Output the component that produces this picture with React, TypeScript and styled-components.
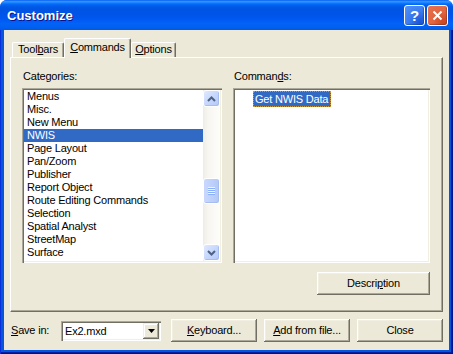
import React from "react";
import styled, { createGlobalStyle } from "styled-components";

const Global = createGlobalStyle`
  html, body { margin: 0; padding: 0; background: #ffffff; }
  body {
    font-family: "Liberation Sans", Arial, sans-serif;
    font-size: 11px;
    letter-spacing: -0.2px;
    color: #000000;
  }
  #root { width: 453px; height: 354px; }
`;

const Window = styled.div`
  width: 453px;
  height: 354px;
  box-sizing: border-box;
  display: flex;
  flex-direction: column;
  border-radius: 7px 7px 0 0;
  overflow: hidden;
  background: #0842e0;
`;

const TitleBar = styled.div`
  height: 30px;
  flex: none;
  box-sizing: border-box;
  display: flex;
  align-items: center;
  padding: 1px 5px 0 7px;
  background: linear-gradient(
    180deg,
    #0058ee 0%,
    #3593ff 4%,
    #288eff 7%,
    #127dff 10%,
    #036ffc 13%,
    #0262ee 17%,
    #0057e5 24%,
    #0054e3 30%,
    #0055eb 56%,
    #005bf5 68%,
    #0463f8 80%,
    #0060ef 90%,
    #0058e6 100%
  );
`;

const Title = styled.div`
  flex: 1;
  font-family: "Liberation Sans", Arial, sans-serif;
  font-weight: bold;
  font-size: 13px;
  letter-spacing: 0;
  color: #ffffff;
  text-shadow: 1px 1px #0f1089;
`;

const CaptionButton = styled.div<{ $kind: "help" | "close" }>`
  width: 21px;
  height: 21px;
  box-sizing: border-box;
  border: 1px solid #ffffff;
  border-radius: 3px;
  margin-left: 2px;
  display: flex;
  align-items: center;
  justify-content: center;
  color: #ffffff;
  font-family: "Liberation Sans", Arial, sans-serif;
  font-weight: bold;
  font-size: 15px;
  background: ${(p) =>
    p.$kind === "close"
      ? "radial-gradient(circle at 80% 85%, #cc4623 0%, #e2643f 45%, #e5744f 100%)"
      : "radial-gradient(circle at 80% 85%, #1a55d8 0%, #3a7cf0 50%, #5594f5 100%)"};
  box-shadow: inset -1px -1px 1px rgba(0, 0, 0, 0.25);
`;

const Frame = styled.div`
  flex: 1;
  display: flex;
  padding: 0 4px 4px 4px;
  background: #0855dd;
  box-shadow: inset 1px 0 #0831d9, inset -1px -1px #00138c, inset -2px -2px #001ea0;
`;

const Body = styled.div`
  flex: 1;
  background: #ece9d8;
  display: flex;
  flex-direction: column;
  padding: 8px 6px 8px 6px;
`;

const TabStrip = styled.div`
  height: 19px;
  flex: none;
  display: flex;
  align-items: flex-end;
  padding-left: 2px;
  position: relative;
  z-index: 1;
`;

const Tab = styled.div<{ $active?: boolean; $w: number }>`
  width: ${(p) => p.$w}px;
  height: ${(p) => (p.$active ? 20 : 15)}px;
  margin-bottom: ${(p) => (p.$active ? -1 : 0)}px;
  box-sizing: border-box;
  background: #ece9d8;
  border-top: 1px solid #ffffff;
  border-left: 1px solid #ffffff;
  border-right: 1px solid #716f64;
  border-radius: 2px 2px 0 0;
  box-shadow: inset -1px 0 #aca899;
  padding-top: ${(p) => (p.$active ? 2 : 0)}px;
  line-height: 12px;
  text-align: center;
  white-space: nowrap;
`;

const Panel = styled.div`
  height: 255px;
  flex: none;
  box-sizing: border-box;
  border-top: 1px solid #ffffff;
  border-left: 1px solid #ffffff;
  border-right: 1px solid #716f64;
  border-bottom: 1px solid #716f64;
  box-shadow: inset -1px -1px #aca899;
  padding: 12px 0 0 11px;
  display: grid;
  grid-template-columns: 200px 197px;
  grid-template-rows: 13px 175px 23px;
  column-gap: 11px;
  row-gap: 0;
`;

const FieldLabel = styled.div`
  line-height: 13px;
  padding-left: 1px;
  white-space: nowrap;
`;

const ListBox = styled.div`
  margin-top: 5px;
  height: 175px;
  box-sizing: border-box;
  padding: 2px;
  background: #ffffff;
  box-shadow: inset 1px 1px #aca899, inset 2px 2px #716f64, inset -1px -1px #ffffff,
    inset -2px -2px #f1efe2;
  display: flex;
  overflow: hidden;
`;

const Items = styled.div`
  flex: 1;
  display: flex;
  flex-direction: column;
  overflow: hidden;
`;

const ListItem = styled.div<{ $selected?: boolean }>`
  height: 13px;
  flex: none;
  line-height: 13px;
  padding-left: 3px;
  white-space: nowrap;
  background: ${(p) => (p.$selected ? "#316ac5" : "transparent")};
  color: ${(p) => (p.$selected ? "#ffffff" : "#000000")};
`;

const ScrollBar = styled.div`
  width: 17px;
  flex: none;
  display: flex;
  flex-direction: column;
  background: linear-gradient(90deg, #eeede5 0%, #f7f6f1 30%, #fdfdfa 100%);
`;

const ScrollButton = styled.div`
  width: 17px;
  height: 17px;
  flex: none;
  box-sizing: border-box;
  border: 1px solid #ffffff;
  border-radius: 3px;
  background: linear-gradient(135deg, #e0e9fe 0%, #c7d7fc 50%, #b5c9f7 100%);
  box-shadow: inset -1px -1px #a6bdf0;
  display: flex;
  align-items: center;
  justify-content: center;
`;

const Thumb = styled.div<{ $top: number; $height: number }>`
  margin-top: ${(p) => p.$top}px;
  height: ${(p) => p.$height}px;
  width: 17px;
  flex: none;
  box-sizing: border-box;
  border: 1px solid #ffffff;
  border-radius: 3px;
  background: linear-gradient(90deg, #c9d8fc 0%, #bccffa 60%, #b3c8f6 100%);
  box-shadow: inset -1px -1px #a6bdf0;
  display: flex;
  align-items: center;
  justify-content: center;
`;

const Grip = styled.div`
  width: 7px;
  height: 8px;
  background: repeating-linear-gradient(
    180deg,
    #eef3fe 0px,
    #eef3fe 1px,
    #8cb0f8 1px,
    #8cb0f8 2px
  );
`;

const Spacer = styled.div`
  flex: 1;
`;

const CommandItem = styled.div`
  margin: 1px 0 0 18px;
  height: 16px;
  box-sizing: border-box;
  border: 1px dotted #ce953a;
  background: #316ac5;
  color: #ffffff;
  line-height: 14px;
  padding: 0 2px 0 1px;
  white-space: nowrap;
  align-self: flex-start;
`;

const CommandList = styled(ListBox)`
  flex-direction: column;
`;

const ButtonRow = styled.div`
  grid-column: 2;
  display: flex;
  justify-content: flex-end;
  margin-top: 14px;
`;

const Button = styled.div<{ $w: number }>`
  width: ${(p) => p.$w}px;
  height: 23px;
  flex: none;
  box-sizing: border-box;
  background: #ece9d8;
  box-shadow: inset -1px -1px #716f64, inset 1px 1px #ffffff, inset -2px -2px #aca899,
    inset 2px 2px #f1efe2;
  display: flex;
  align-items: center;
  justify-content: center;
  white-space: nowrap;
  padding-bottom: 1px;
`;

const Footer = styled.div`
  margin-top: 7px;
  height: 23px;
  flex: none;
  display: flex;
  align-items: center;
`;

const FooterLabel = styled.div`
  margin-left: 1px;
  width: 50px;
  white-space: nowrap;
  padding-bottom: 1px;
`;

const Combo = styled.div`
  width: 100px;
  height: 20px;
  box-sizing: border-box;
  padding: 2px;
  background: #ffffff;
  box-shadow: inset 1px 1px #aca899, inset 2px 2px #716f64, inset -1px -1px #ffffff,
    inset -2px -2px #f1efe2;
  display: flex;
  align-items: center;
`;

const ComboText = styled.div`
  flex: 1;
  padding-left: 2px;
  line-height: 16px;
`;

const ComboArrow = styled.div`
  width: 16px;
  height: 16px;
  box-sizing: border-box;
  background: #ece9d8;
  box-shadow: inset -1px -1px #716f64, inset 1px 1px #f1efe2, inset -2px -2px #aca899,
    inset 2px 2px #ffffff;
  display: flex;
  align-items: center;
  justify-content: center;
`;

const FooterButtons = styled.div`
  margin-left: auto;
  display: flex;
  gap: 7px;
`;

const Accel = styled.span`
  text-decoration: underline;
  text-underline-offset: 1px;
`;

const categories = [
  "Menus",
  "Misc.",
  "New Menu",
  "NWIS",
  "Page Layout",
  "Pan/Zoom",
  "Publisher",
  "Report Object",
  "Route Editing Commands",
  "Selection",
  "Spatial Analyst",
  "StreetMap",
  "Surface",
  "Survey Analyst",
];

const Chevron = ({ up }: { up?: boolean }) => (
  <svg width="9" height="6" viewBox="0 0 9 6">
    <path
      d={up ? "M1 5 L4.5 1.5 L8 5" : "M1 1 L4.5 4.5 L8 1"}
      fill="none"
      stroke="#4d6185"
      strokeWidth="2"
    />
  </svg>
);

const CloseGlyph = () => (
  <svg width="11" height="11" viewBox="0 0 11 11">
    <path d="M1.5 1.5 L9.5 9.5 M9.5 1.5 L1.5 9.5" stroke="#ffffff" strokeWidth="2" />
  </svg>
);

const DownTriangle = () => (
  <svg width="7" height="4" viewBox="0 0 7 4">
    <path d="M0 0 H7 L3.5 4 Z" fill="#000000" />
  </svg>
);

export default function App() {
  return (
    <>
      <Global />
      <Window>
        <TitleBar>
          <Title>Customize</Title>
          <CaptionButton $kind="help">?</CaptionButton>
          <CaptionButton $kind="close">
            <CloseGlyph />
          </CaptionButton>
        </TitleBar>
        <Frame>
          <Body>
            <TabStrip>
              <Tab $w={52}>
                Tool<Accel>b</Accel>ars
              </Tab>
              <Tab $w={67} $active>
                <Accel>C</Accel>ommands
              </Tab>
              <Tab $w={45}>
                <Accel>O</Accel>ptions
              </Tab>
            </TabStrip>
            <Panel>
              <FieldLabel>Categories:</FieldLabel>
              <FieldLabel>
                Comman<Accel>d</Accel>s:
              </FieldLabel>
              <ListBox>
                <Items>
                  {categories.map((c) => (
                    <ListItem key={c} $selected={c === "NWIS"}>
                      {c}
                    </ListItem>
                  ))}
                </Items>
                <ScrollBar>
                  <ScrollButton>
                    <Chevron up />
                  </ScrollButton>
                  <Thumb $top={71} $height={26}>
                    <Grip />
                  </Thumb>
                  <Spacer />
                  <ScrollButton>
                    <Chevron />
                  </ScrollButton>
                </ScrollBar>
              </ListBox>
              <CommandList>
                <CommandItem>Get NWIS Data</CommandItem>
              </CommandList>
              <ButtonRow>
                <Button $w={113}>
                  Descri<Accel>p</Accel>tion
                </Button>
              </ButtonRow>
            </Panel>
            <Footer>
              <FooterLabel>
                <Accel>S</Accel>ave in:
              </FooterLabel>
              <Combo>
                <ComboText>Ex2.mxd</ComboText>
                <ComboArrow>
                  <DownTriangle />
                </ComboArrow>
              </Combo>
              <FooterButtons>
                <Button $w={86}>
                  <Accel>K</Accel>eyboard...
                </Button>
                <Button $w={86}>
                  <Accel>A</Accel>dd from file...
                </Button>
                <Button $w={86}>Close</Button>
              </FooterButtons>
            </Footer>
          </Body>
        </Frame>
      </Window>
    </>
  );
}
